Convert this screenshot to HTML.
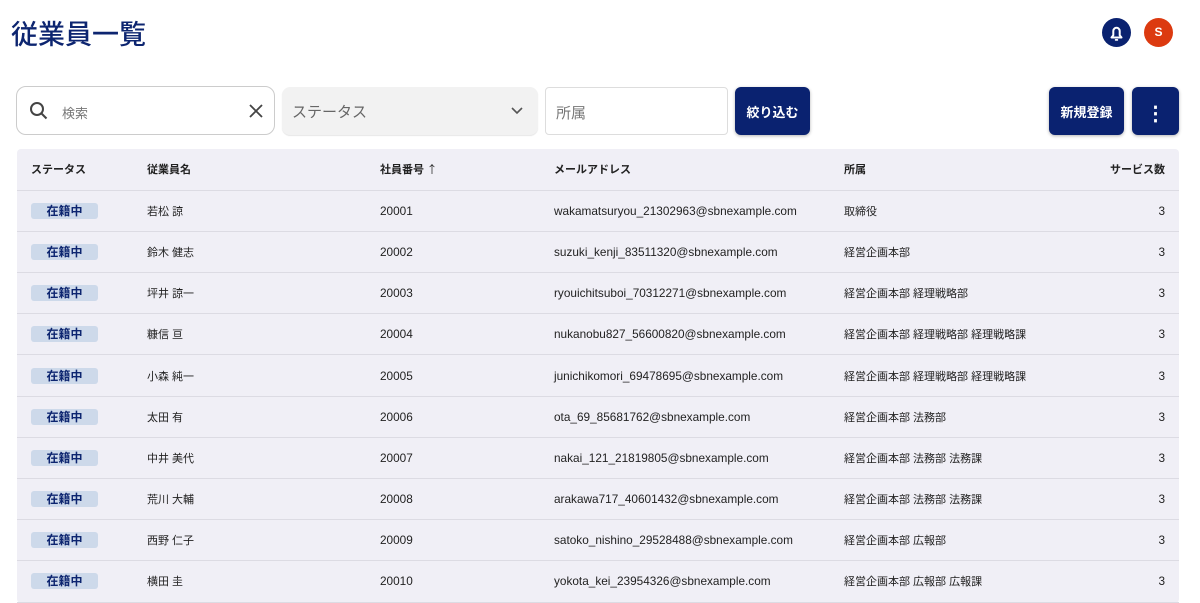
<!DOCTYPE html>
<html><head><meta charset="utf-8"><style>
*{box-sizing:border-box;margin:0;padding:0}
body{width:1200px;height:599px;overflow:hidden;background:#fff;font-family:"Liberation Sans","Noto Sans CJK JP",sans-serif;color:#222;position:relative}
.a{position:absolute}
h1{position:absolute;left:11px;top:14px;font-size:27px;font-weight:500;color:#0d2570;font-family:"Noto Sans CJK JP",sans-serif;line-height:38px}
.btn{position:absolute;top:87px;height:48px;background:#0a2270;border-radius:6px;color:#fff;font-size:13px;font-weight:bold;display:flex;align-items:center;justify-content:center;box-shadow:0 1px 3px rgba(0,0,0,.3);font-family:"Noto Sans CJK JP",sans-serif}
table{position:absolute;left:17px;top:149px;width:1162px;border-collapse:collapse;background:#f0eff6;font-size:11.8px;font-family:"Liberation Sans","Noto Sans CJK JP",sans-serif;border-radius:4px}
td,th{height:41.2px;border-bottom:1px solid #dcdbe3;text-align:left;padding:0;white-space:nowrap}
td{font-size:11px}
td.e,td.n{font-size:11.8px}
th{font-weight:bold;font-size:11px;font-family:"Noto Sans CJK JP",sans-serif}
td:first-child,th:first-child{padding-left:14px;width:130px}
.b{display:inline-block;width:67px;height:16px;line-height:16px;background:#cdd9ea;color:#0d2570;font-weight:bold;text-align:center;border-radius:3px;font-size:12px;font-family:"Noto Sans CJK JP",sans-serif}
.r{text-align:right;padding-right:14px}
</style></head><body>
<h1>従業員一覧</h1>
<div class="a" style="left:1102px;top:18px;width:29px;height:29px;border-radius:50%;background:#0a2270">
<svg width="29" height="29" viewBox="0 0 29 29"><path d="M9.5 19.5h10l-1.8-2.2v-4.3a3.2 3.2 0 0 0-6.4 0v4.3z" fill="none" stroke="#fff" stroke-width="2" stroke-linejoin="round"/><rect x="12.8" y="21" width="3.4" height="1.8" rx=".8" fill="#fff"/></svg></div>
<div class="a" style="left:1144px;top:18px;width:29px;height:29px;border-radius:50%;background:#dc3a10;color:#fff;font-size:12px;font-weight:bold;text-align:center;line-height:29px">S</div>
<div class="a" style="left:16px;top:86px;width:259px;height:49px;border:1px solid #ccc;border-radius:10px">
<svg class="a" style="left:10px;top:12px" width="24" height="24" viewBox="0 0 24 24"><circle cx="10" cy="10" r="6" fill="none" stroke="#444" stroke-width="2"/><path d="M14.5 14.5l5 5" stroke="#444" stroke-width="2"/></svg>
<span class="a" style="left:45px;top:16px;font-size:13px;color:#777">検索</span>
<svg class="a" style="left:231px;top:16px" width="16" height="16" viewBox="0 0 16 16"><path d="M2 2l12 12M14 2L2 14" stroke="#444" stroke-width="1.8"/></svg></div>
<div class="a" style="left:282px;top:87px;width:256px;height:48px;background:#f2f2f2;border-radius:8px;box-shadow:0 1px 1px rgba(0,0,0,.1)">
<span class="a" style="left:10px;top:14px;font-size:15px;color:#666">ステータス</span>
<svg class="a" style="left:228px;top:18px" width="14" height="12" viewBox="0 0 14 12"><path d="M2 3l5 5 5-5" fill="none" stroke="#555" stroke-width="1.6"/></svg></div>
<div class="a" style="left:545px;top:87px;width:183px;height:48px;border:1px solid #ddd;border-radius:4px"><span class="a" style="left:10px;top:14px;font-size:15px;color:#777">所属</span></div>
<div class="btn" style="left:735px;width:75px">絞り込む</div>
<div class="btn" style="left:1049px;width:75px">新規登録</div>
<div class="btn" style="left:1132px;width:47px;font-size:20px">⋮</div>
<table>
<tr><th>ステータス</th><th style="width:233px">従業員名</th><th style="width:174px">社員番号 <span style="font-weight:normal">↑</span></th><th style="width:290px">メールアドレス</th><th>所属</th><th class="r">サービス数</th></tr>
<tr><td><span class="b">在籍中</span></td><td>若松 諒</td><td class="n">20001</td><td class="e">wakamatsuryou_21302963@sbnexample.com</td><td>取締役</td><td class="r n">3</td></tr>
<tr><td><span class="b">在籍中</span></td><td>鈴木 健志</td><td class="n">20002</td><td class="e">suzuki_kenji_83511320@sbnexample.com</td><td>経営企画本部</td><td class="r n">3</td></tr>
<tr><td><span class="b">在籍中</span></td><td>坪井 諒一</td><td class="n">20003</td><td class="e">ryouichitsuboi_70312271@sbnexample.com</td><td>経営企画本部 経理戦略部</td><td class="r n">3</td></tr>
<tr><td><span class="b">在籍中</span></td><td>糠信 亘</td><td class="n">20004</td><td class="e">nukanobu827_56600820@sbnexample.com</td><td>経営企画本部 経理戦略部 経理戦略課</td><td class="r n">3</td></tr>
<tr><td><span class="b">在籍中</span></td><td>小森 純一</td><td class="n">20005</td><td class="e">junichikomori_69478695@sbnexample.com</td><td>経営企画本部 経理戦略部 経理戦略課</td><td class="r n">3</td></tr>
<tr><td><span class="b">在籍中</span></td><td>太田 有</td><td class="n">20006</td><td class="e">ota_69_85681762@sbnexample.com</td><td>経営企画本部 法務部</td><td class="r n">3</td></tr>
<tr><td><span class="b">在籍中</span></td><td>中井 美代</td><td class="n">20007</td><td class="e">nakai_121_21819805@sbnexample.com</td><td>経営企画本部 法務部 法務課</td><td class="r n">3</td></tr>
<tr><td><span class="b">在籍中</span></td><td>荒川 大輔</td><td class="n">20008</td><td class="e">arakawa717_40601432@sbnexample.com</td><td>経営企画本部 法務部 法務課</td><td class="r n">3</td></tr>
<tr><td><span class="b">在籍中</span></td><td>西野 仁子</td><td class="n">20009</td><td class="e">satoko_nishino_29528488@sbnexample.com</td><td>経営企画本部 広報部</td><td class="r n">3</td></tr>
<tr><td><span class="b">在籍中</span></td><td>横田 圭</td><td class="n">20010</td><td class="e">yokota_kei_23954326@sbnexample.com</td><td>経営企画本部 広報部 広報課</td><td class="r n">3</td></tr>
</table>
</body></html>
